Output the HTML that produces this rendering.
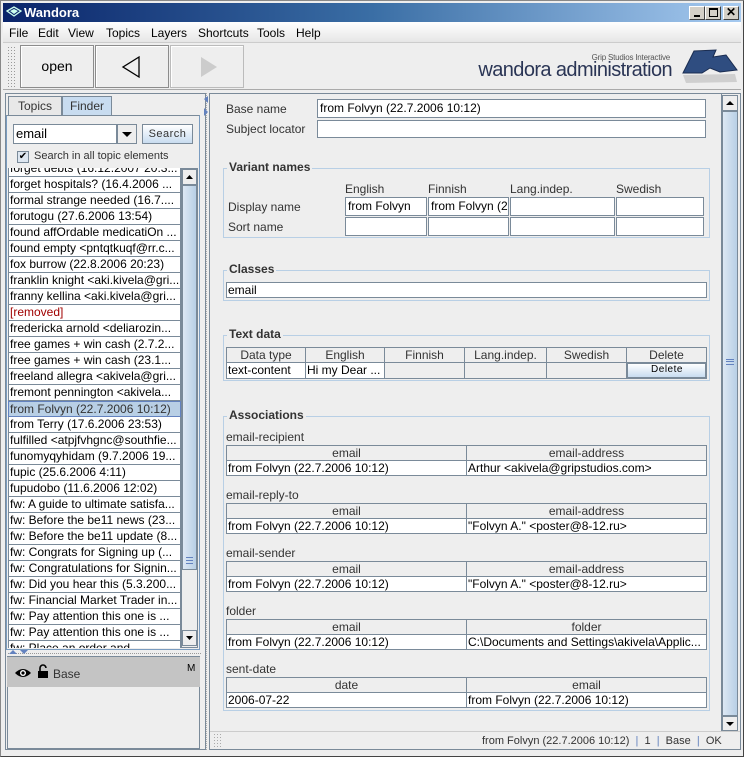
<!DOCTYPE html>
<html><head><meta charset="utf-8"><style>
*{box-sizing:border-box;margin:0;padding:0}
body{width:744px;height:757px;overflow:hidden;background:#eeeeee;font-family:"Liberation Sans",sans-serif;font-size:12px;color:#333;position:relative}
.a{position:absolute;white-space:nowrap}
.f{position:absolute;background:#fff;border:1px solid #7a8a99;overflow:hidden;white-space:nowrap;padding-left:2px;line-height:16px;color:#000}
.lbl{position:absolute;white-space:nowrap;color:#333}
.fs{position:absolute;border:1px solid #b8cfe5}
.fs b{position:absolute;top:-9px;left:3px;background:#eee;padding:0 2px;font-size:12px;color:#333}
.th{position:absolute;background:#eee;border:1px solid #7a8a99;text-align:center;line-height:14px;color:#333;overflow:hidden}
.td{position:absolute;background:#fff;border:1px solid #7a8a99;line-height:14px;padding-left:1px;color:#000;overflow:hidden;white-space:nowrap}
.row{position:absolute;left:8px;width:173px;height:16px;background:#fff;border:1px solid #7a8a99;border-top:none;line-height:15px;padding-left:1px;color:#000;white-space:nowrap;overflow:hidden;font-size:12px}
.btn{position:absolute;border:1px solid #8c8c8c;background:#eee;box-shadow:inset 1px 1px #fff}
</style></head><body>
<div class="a" style="left:0;top:0;width:744px;height:757px;border:1px solid #888;border-right-color:#444;border-bottom-color:#444"></div>
<div class="a" style="left:3px;top:3px;width:738px;height:19px;background:linear-gradient(90deg,#0a246a,#3a6ea5 50%,#a6caf0)"></div>
<svg class="a" style="left:6px;top:6px" width="16" height="12"><path d="M1 5 L8 1 L15 5 L8 10Z" fill="none" stroke="#cfe" stroke-width="1.3"/><path d="M4 5 L8 3 L12 5 L8 8Z" fill="#cfe"/></svg>
<div class="a" style="left:24px;top:5px;color:#fff;font-weight:bold;font-size:13px">Wandora</div>
<div class="a" style="left:689px;top:6px;width:16px;height:14px;background:#d4d0c8;border:1px solid;border-color:#fff #404040 #404040 #fff"><div class="a" style="left:4px;top:8px;width:6px;height:2px;background:#000"></div></div>
<div class="a" style="left:705px;top:6px;width:16px;height:14px;background:#d4d0c8;border:1px solid;border-color:#fff #404040 #404040 #fff"><div class="a" style="left:3px;top:1px;width:9px;height:9px;border:1px solid #000;border-top-width:2px"></div></div>
<div class="a" style="left:723px;top:6px;width:16px;height:14px;background:#d4d0c8;border:1px solid;border-color:#fff #404040 #404040 #fff;font-weight:bold;font-size:12px;line-height:11px;text-align:center;color:#000">✕</div>
<div class="a" style="left:3px;top:22px;width:738px;height:21px;background:linear-gradient(#fff,#e6e6e6);border-bottom:1px solid #ccc"></div>
<div class="a" style="left:9px;top:26px;color:#000">File</div>
<div class="a" style="left:38px;top:26px;color:#000">Edit</div>
<div class="a" style="left:68px;top:26px;color:#000">View</div>
<div class="a" style="left:106px;top:26px;color:#000">Topics</div>
<div class="a" style="left:151px;top:26px;color:#000">Layers</div>
<div class="a" style="left:198px;top:26px;color:#000">Shortcuts</div>
<div class="a" style="left:257px;top:26px;color:#000">Tools</div>
<div class="a" style="left:296px;top:26px;color:#000">Help</div>
<div class="a" style="left:3px;top:44px;width:738px;height:46px;background:#eee;border-bottom:1px solid #aaa"></div>
<div class="a" style="left:7px;top:46px;width:8px;height:42px;background-image:radial-gradient(#999 30%,transparent 31%);background-size:3px 3px"></div>
<div class="btn" style="left:20px;top:45px;width:74px;height:43px;text-align:center;line-height:41px;font-size:14px;color:#000">open</div>
<div class="btn" style="left:95px;top:45px;width:74px;height:43px"><svg width="72" height="41"><path d="M43 11 L27 21 L43 31Z" fill="none" stroke="#000" stroke-width="1.3"/></svg></div>
<div class="btn" style="left:170px;top:45px;width:74px;height:43px;border-color:#bbb"><svg width="72" height="41"><path d="M30 11 L46 21 L30 31Z" fill="#ccc"/></svg></div>
<div class="a" style="right:74px;top:53px;font-size:8px;color:#555;letter-spacing:-0.2px">Grip Studios Interactive</div>
<div class="a" style="right:72px;top:59px;font-size:20px;color:#2a3555;letter-spacing:-0.6px">wandora administration</div>
<svg class="a" style="left:680px;top:48px" width="60" height="40"><path d="M14 3 L36 2 L33 9 L46 7 L57 22 L40 24 L30 20 L22 25 L3 25Z" fill="#2f4d80" stroke="#1a2c50"/><path d="M3 27 L55 26 L57 34 L6 35Z" fill="#bbb" opacity="0.6"/></svg>
<div class="a" style="left:5px;top:93px;width:201px;height:657px;border:1px solid #7a8a99;background:#eee"></div>
<div class="a" style="left:8px;top:96px;width:54px;height:19px;border:1px solid #7a8a99;border-bottom:none;background:#e8e8e8;text-align:center;line-height:18px">Topics</div>
<div class="a" style="left:62px;top:96px;width:50px;height:20px;border:1px solid #7a8a99;border-bottom:none;background:#c8dcf0;text-align:center;line-height:18px">Finder</div>
<div class="a" style="left:6px;top:115px;width:194px;height:535px;border:1px solid #7a9cc0;border-top-color:#7a8a99"></div>
<div class="f" style="left:13px;top:124px;width:104px;height:20px;line-height:18px;font-size:13px">email</div>
<div class="a" style="left:117px;top:124px;width:20px;height:20px;border:1px solid #7a8a99;background:#eee"><svg width="18" height="18"><path d="M4 7 L14 7 L9 12Z" fill="#000"/></svg></div>
<div class="a" style="left:142px;top:124px;width:51px;height:20px;border:1px solid #7a8a99;background:linear-gradient(#fff,#c8dcf0);text-align:center;line-height:18px;font-size:11px;letter-spacing:0.5px">Search</div>
<div class="a" style="left:17px;top:151px;width:12px;height:12px;border:1px solid #7a8a99;background:#dde6f0;font-size:10px;line-height:10px;text-align:center;color:#000">✔</div>
<div class="a" style="left:34px;top:150px;font-size:11px">Search in all topic elements</div>
<div class="a" style="left:8px;top:168px;width:173px;height:480px;overflow:hidden;background:#eee">
<div style="position:relative;top:-7px;left:-8px">
<div class="row" style="top:0">forget debts (16.12.2007 20:3...</div>
<div class="row" style="top:16px">forget hospitals? (16.4.2006 ...</div>
<div class="row" style="top:32px">formal strange needed (16.7....</div>
<div class="row" style="top:48px">forutogu (27.6.2006 13:54)</div>
<div class="row" style="top:64px">found affOrdable medicatiOn ...</div>
<div class="row" style="top:80px">found empty &lt;pntqtkuqf@rr.c...</div>
<div class="row" style="top:96px">fox burrow (22.8.2006 20:23)</div>
<div class="row" style="top:112px">franklin knight &lt;aki.kivela@gri...</div>
<div class="row" style="top:128px">franny kellina &lt;aki.kivela@gri...</div>
<div class="row" style="top:144px;color:#a00000">[removed]</div>
<div class="row" style="top:160px">fredericka arnold &lt;deliarozin...</div>
<div class="row" style="top:176px">free games + win cash (2.7.2...</div>
<div class="row" style="top:192px">free games + win cash (23.1...</div>
<div class="row" style="top:208px">freeland allegra &lt;akivela@gri...</div>
<div class="row" style="top:224px">fremont pennington &lt;akivela...</div>
<div class="row" style="top:240px;background:#b8cfe5;color:#333;border:1px solid #6382bf">from Folvyn (22.7.2006 10:12)</div>
<div class="row" style="top:256px">from Terry (17.6.2006 23:53)</div>
<div class="row" style="top:272px">fulfilled &lt;atpjfvhgnc@southfie...</div>
<div class="row" style="top:288px">funomyqyhidam (9.7.2006 19...</div>
<div class="row" style="top:304px">fupic (25.6.2006 4:11)</div>
<div class="row" style="top:320px">fupudobo (11.6.2006 12:02)</div>
<div class="row" style="top:336px">fw: A guide to ultimate satisfa...</div>
<div class="row" style="top:352px">fw: Before the be11 news (23...</div>
<div class="row" style="top:368px">fw: Before the be11 update (8...</div>
<div class="row" style="top:384px">fw: Congrats for Signing up (...</div>
<div class="row" style="top:400px">fw: Congratulations for Signin...</div>
<div class="row" style="top:416px">fw: Did you hear this (5.3.200...</div>
<div class="row" style="top:432px">fw: Financial Market Trader in...</div>
<div class="row" style="top:448px">fw: Pay attention this one is ...</div>
<div class="row" style="top:464px">fw: Pay attention this one is ...</div>
<div class="row" style="top:480px">fw: Place an order and ...</div>
</div></div>
<div class="a" style="left:181px;top:168px;width:17px;height:480px;background:#eee;border:1px solid #7a8a99"></div>
<div class="a" style="left:182px;top:169px;width:15px;height:16px;border:1px solid #7a8a99;background:#eee"><svg width="13" height="14"><path d="M3 9 L10 9 L6.5 5Z" fill="#000"/></svg></div>
<div class="a" style="left:182px;top:185px;width:15px;height:385px;border:1px solid #7a8a99;background:linear-gradient(90deg,#dde8f4,#b8cfe5)"></div>
<div class="a" style="left:186px;top:557px;width:7px;height:7px;border-top:1px solid #6382bf;border-bottom:1px solid #6382bf"></div>
<div class="a" style="left:186px;top:560px;width:7px;height:1px;background:#6382bf"></div>
<div class="a" style="left:182px;top:630px;width:15px;height:16px;border:1px solid #7a8a99;background:#eee"><svg width="13" height="14"><path d="M3 5 L10 5 L6.5 9Z" fill="#000"/></svg></div>
<div class="a" style="left:8px;top:651px;width:193px;height:3px;border-bottom:1px dotted #999"></div>
<svg class="a" style="left:8px;top:649px" width="22" height="6"><path d="M1 5 L5 1 L9 5Z M12 1 L20 1 L16 5Z" fill="#6382bf"/></svg>
<div class="a" style="left:7px;top:656px;width:193px;height:93px;border:1px solid #7a8a99;background:#eee"></div>
<div class="a" style="left:7px;top:657px;width:193px;height:30px;background:#c4c4c4"></div>
<svg class="a" style="left:14px;top:667px" width="18" height="12"><path d="M1 6 Q9 -2 17 6 Q9 14 1 6Z" fill="#000"/><circle cx="9" cy="6" r="3" fill="#fff"/><circle cx="9" cy="6" r="1.6" fill="#000"/></svg>
<svg class="a" style="left:37px;top:664px" width="12" height="15"><path d="M3 7 V4 A3 3 0 0 1 9 4" fill="none" stroke="#000" stroke-width="1.6"/><rect x="1" y="7" width="10" height="7" fill="#000"/></svg>
<div class="a" style="left:53px;top:667px;color:#333">Base</div>
<div class="a" style="left:187px;top:663px;font-size:10px;color:#000">M</div>
<div class="a" style="left:206px;top:93px;width:4px;height:657px;border-left:1px dotted #aaa"></div>
<svg class="a" style="left:202px;top:95px" width="8" height="26"><path d="M6 1 L2 4 L6 8Z M2 13 L6 17 L2 21Z" fill="#6382bf"/></svg>
<div class="a" style="left:209px;top:93px;width:532px;height:657px;border:1px solid #7a8a99;background:#eee"></div>
<div class="a" style="left:721px;top:94px;width:18px;height:637px;border-left:1px solid #7a8a99;background:#eee"></div>
<div class="a" style="left:722px;top:95px;width:16px;height:16px;border:1px solid #7a8a99"><svg width="14" height="14"><path d="M3 9 L11 9 L7 5Z" fill="#000"/></svg></div>
<div class="a" style="left:722px;top:111px;width:16px;height:605px;border:1px solid #7a8a99;background:linear-gradient(90deg,#dde8f4,#b8cfe5)"></div>
<div class="a" style="left:726px;top:359px;width:8px;height:6px;border-top:1px solid #6382bf;border-bottom:1px solid #6382bf"></div>
<div class="a" style="left:726px;top:361px;width:8px;height:1px;background:#6382bf"></div>
<div class="a" style="left:722px;top:716px;width:16px;height:15px;border:1px solid #7a8a99"><svg width="14" height="14"><path d="M3 5 L11 5 L7 9Z" fill="#000"/></svg></div>
<div class="a" style="left:210px;top:731px;width:530px;height:18px;border-top:1px solid #ccc"></div>
<div class="a" style="left:213px;top:733px;width:10px;height:15px;background-image:radial-gradient(#aaa 30%,transparent 31%);background-size:3px 3px"></div>
<div class="a" style="left:482px;top:735px;font-size:11px">from Folvyn (22.7.2006 10:12) <span style="color:#6382bf">&nbsp;|&nbsp;</span> 1 <span style="color:#6382bf">&nbsp;|&nbsp;</span> Base <span style="color:#6382bf">&nbsp;|&nbsp;</span> OK</div>

<div class="lbl" style="left:226px;top:102px">Base name</div>
<div class="f" style="left:317px;top:99px;width:389px;height:19px">from Folvyn (22.7.2006 10:12)</div>
<div class="lbl" style="left:226px;top:122px">Subject locator</div>
<div class="f" style="left:317px;top:120px;width:389px;height:18px"></div>

<div class="fs" style="left:223px;top:168px;width:487px;height:70px"><b>Variant names</b></div>
<div class="lbl" style="left:345px;top:182px">English</div>
<div class="lbl" style="left:428px;top:182px">Finnish</div>
<div class="lbl" style="left:510px;top:182px">Lang.indep.</div>
<div class="lbl" style="left:616px;top:182px">Swedish</div>
<div class="lbl" style="left:228px;top:200px">Display name</div>
<div class="lbl" style="left:228px;top:220px">Sort name</div>
<div class="f" style="left:345px;top:197px;width:82px;height:19px">from Folvyn</div>
<div class="f" style="left:428px;top:197px;width:81px;height:19px">from Folvyn (22</div>
<div class="f" style="left:510px;top:197px;width:105px;height:19px"></div>
<div class="f" style="left:616px;top:197px;width:88px;height:19px"></div>
<div class="f" style="left:345px;top:217px;width:82px;height:19px"></div>
<div class="f" style="left:428px;top:217px;width:81px;height:19px"></div>
<div class="f" style="left:510px;top:217px;width:105px;height:19px"></div>
<div class="f" style="left:616px;top:217px;width:88px;height:19px"></div>

<div class="fs" style="left:223px;top:270px;width:487px;height:31px"><b>Classes</b></div>
<div class="f" style="left:226px;top:282px;width:481px;height:16px;line-height:14px;padding-left:1px">email</div>

<div class="fs" style="left:223px;top:335px;width:487px;height:46px"><b>Text data</b></div>
<div class="th" style="left:226px;top:347px;width:80px;height:16px">Data type</div>
<div class="th" style="left:305px;top:347px;width:80px;height:16px">English</div>
<div class="th" style="left:384px;top:347px;width:81px;height:16px">Finnish</div>
<div class="th" style="left:464px;top:347px;width:83px;height:16px">Lang.indep.</div>
<div class="th" style="left:546px;top:347px;width:81px;height:16px">Swedish</div>
<div class="th" style="left:626px;top:347px;width:81px;height:16px">Delete</div>
<div class="td" style="left:226px;top:362px;width:80px;height:17px">text-content</div>
<div class="td" style="left:305px;top:362px;width:80px;height:17px">Hi my Dear ...</div>
<div class="td" style="left:384px;top:362px;width:81px;height:17px;background:#eee"></div>
<div class="td" style="left:464px;top:362px;width:83px;height:17px;background:#eee"></div>
<div class="td" style="left:546px;top:362px;width:81px;height:17px;background:#eee"></div>
<div class="td" style="left:626px;top:362px;width:81px;height:17px;background:linear-gradient(#fff,#c8dcf0);border:2px solid #7a8a99;text-align:center;font-size:10px;letter-spacing:0.5px;line-height:12px">Delete</div>

<div class="fs" style="left:223px;top:416px;width:487px;height:295px"><b>Associations</b></div>
<div class="lbl" style="left:226px;top:430px">email-recipient</div>
<div class="th" style="left:226px;top:445px;width:241px;height:16px">email</div>
<div class="th" style="left:466px;top:445px;width:241px;height:16px">email-address</div>
<div class="td" style="left:226px;top:460px;width:241px;height:16px">from Folvyn (22.7.2006 10:12)</div>
<div class="td" style="left:466px;top:460px;width:241px;height:16px">Arthur &lt;akivela@gripstudios.com&gt;</div>

<div class="lbl" style="left:226px;top:488px">email-reply-to</div>
<div class="th" style="left:226px;top:503px;width:241px;height:16px">email</div>
<div class="th" style="left:466px;top:503px;width:241px;height:16px">email-address</div>
<div class="td" style="left:226px;top:518px;width:241px;height:16px">from Folvyn (22.7.2006 10:12)</div>
<div class="td" style="left:466px;top:518px;width:241px;height:16px">"Folvyn A." &lt;poster@8-12.ru&gt;</div>

<div class="lbl" style="left:226px;top:546px">email-sender</div>
<div class="th" style="left:226px;top:561px;width:241px;height:16px">email</div>
<div class="th" style="left:466px;top:561px;width:241px;height:16px">email-address</div>
<div class="td" style="left:226px;top:576px;width:241px;height:16px">from Folvyn (22.7.2006 10:12)</div>
<div class="td" style="left:466px;top:576px;width:241px;height:16px">"Folvyn A." &lt;poster@8-12.ru&gt;</div>

<div class="lbl" style="left:226px;top:604px">folder</div>
<div class="th" style="left:226px;top:619px;width:241px;height:16px">email</div>
<div class="th" style="left:466px;top:619px;width:241px;height:16px">folder</div>
<div class="td" style="left:226px;top:634px;width:241px;height:16px">from Folvyn (22.7.2006 10:12)</div>
<div class="td" style="left:466px;top:634px;width:241px;height:16px">C:\Documents and Settings\akivela\Applic...</div>

<div class="lbl" style="left:226px;top:662px">sent-date</div>
<div class="th" style="left:226px;top:677px;width:241px;height:16px">date</div>
<div class="th" style="left:466px;top:677px;width:241px;height:16px">email</div>
<div class="td" style="left:226px;top:692px;width:241px;height:16px">2006-07-22</div>
<div class="td" style="left:466px;top:692px;width:241px;height:16px">from Folvyn (22.7.2006 10:12)</div>
</body></html>
